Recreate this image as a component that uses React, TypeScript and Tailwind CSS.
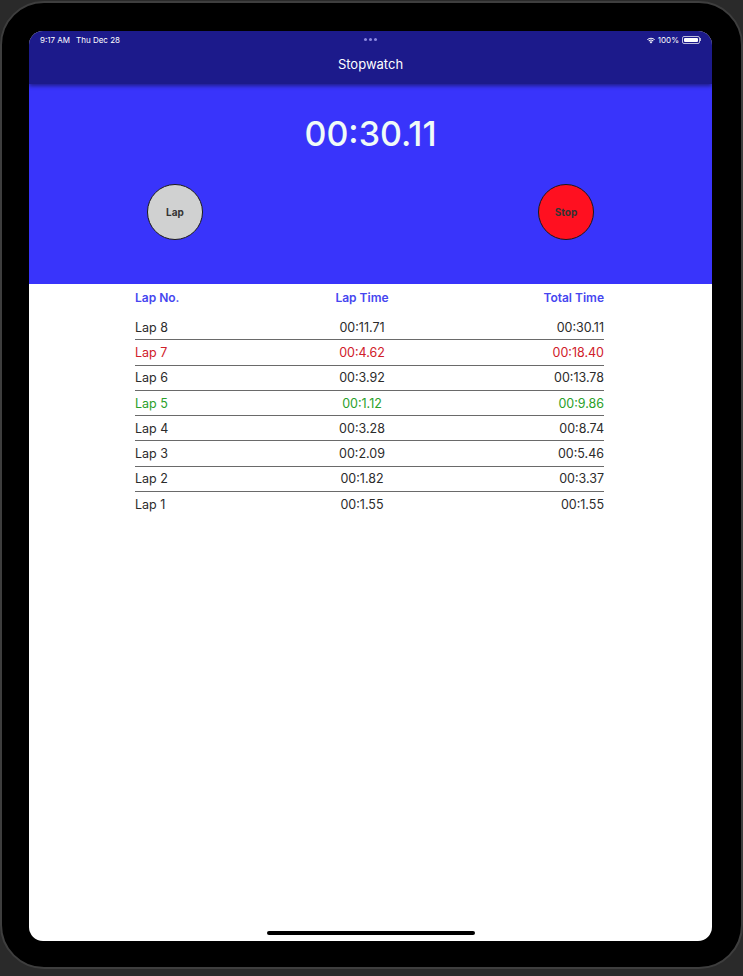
import React from "react";

const laps = [
  { n: "Lap 8", lap: "00:11.71", total: "00:30.11", c: "text-[#2b2b2b]" },
  { n: "Lap 7", lap: "00:4.62", total: "00:18.40", c: "text-[#d0202a]" },
  { n: "Lap 6", lap: "00:3.92", total: "00:13.78", c: "text-[#2b2b2b]" },
  { n: "Lap 5", lap: "00:1.12", total: "00:9.86", c: "text-[#2aa02a]" },
  { n: "Lap 4", lap: "00:3.28", total: "00:8.74", c: "text-[#2b2b2b]" },
  { n: "Lap 3", lap: "00:2.09", total: "00:5.46", c: "text-[#2b2b2b]" },
  { n: "Lap 2", lap: "00:1.82", total: "00:3.37", c: "text-[#2b2b2b]" },
  { n: "Lap 1", lap: "00:1.55", total: "00:1.55", c: "text-[#2b2b2b]" },
];

export default function App() {
  return (
    <div
      className="w-[743px] h-[976px] bg-[#2a2a2a] overflow-hidden"
      style={{ fontFamily: "Inter, 'Liberation Sans', sans-serif" }}
    >
      <div className="mt-[1px] w-[743px] h-[968px] rounded-[44px] border-2 border-[#3e3e3e] bg-black pl-[27px] pt-[28px]">
        <div className="w-[683px] h-[910px] rounded-[14px] bg-white overflow-hidden flex flex-col">
          {/* nav bar */}
          <div className="relative z-10 h-[53px] bg-[#1c1a8b] shadow-[0_2px_4px_rgba(0,0,0,0.45)] flex flex-col">
            <div className="h-[17px] flex items-center px-[11px] text-[8px] text-white">
              <div className="flex-1 flex gap-[6px]">
                <span>9:17 AM</span>
                <span>Thu Dec 28</span>
              </div>
              <div className="flex gap-[2px]">
                <span className="w-[3px] h-[3px] rounded-full bg-[#8a88e0]" />
                <span className="w-[3px] h-[3px] rounded-full bg-[#8a88e0]" />
                <span className="w-[3px] h-[3px] rounded-full bg-[#8a88e0]" />
              </div>
              <div className="flex-1 flex justify-end items-center gap-[2px]">
                <svg width="10" height="8" viewBox="0 0 10 8">
                  <path d="M5 7.5 L3.6 6 A2 2 0 0 1 6.4 6 Z" fill="white" />
                  <path d="M2.4 4.8 A3.7 3.7 0 0 1 7.6 4.8 L6.9 5.5 A2.7 2.7 0 0 0 3.1 5.5 Z" fill="white" />
                  <path d="M1 3.4 A5.6 5.6 0 0 1 9 3.4 L8.3 4.1 A4.6 4.6 0 0 0 1.7 4.1 Z" fill="white" />
                </svg>
                <span>100%</span>
                <div className="ml-[1px] flex items-center">
                  <div className="w-[18px] h-[8px] rounded-[2px] border border-white/70 p-[1px]">
                    <div className="w-full h-full bg-white rounded-[1px]" />
                  </div>
                  <div className="w-[1px] h-[3px] bg-white/70" />
                </div>
              </div>
            </div>
            <div className="flex-1 flex items-center justify-center text-[13px] text-white pb-[2px]">
              Stopwatch
            </div>
          </div>
          {/* timer area */}
          <div className="h-[200px] bg-[#3934fb] flex flex-col items-center">
            <div className="mt-[30px] h-[40px] flex items-center text-[34px] leading-none text-[#f0fbf7] font-medium">
              00:30.11
            </div>
            <div className="mt-[30px] w-full px-[118px] flex justify-between">
              <div className="w-[56px] h-[56px] rounded-full bg-[#d0d1d1] border-[1.5px] border-[#1a1a1a] flex items-center justify-center text-[10px] font-bold text-[#333]">
                Lap
              </div>
              <div className="w-[56px] h-[56px] rounded-full bg-[#ff1020] border-[1.5px] border-[#1a1a1a] flex items-center justify-center text-[10px] font-bold text-[#333]">
                Stop
              </div>
            </div>
          </div>
          {/* table */}
          <div className="w-[469px] ml-[106px]">
            <div className="mt-[5px] h-[14px] grid grid-cols-[170px_114px_1fr] items-center text-[12px] font-semibold text-[#4646f0]">
              <span>Lap No.</span>
              <span className="text-center">Lap Time</span>
              <span className="text-right">Total Time</span>
            </div>
            <div className="mt-[12px]">
              {laps.map((l, i) => (
                <div
                  key={l.n}
                  className={`h-[25.25px] grid grid-cols-[170px_114px_1fr] items-center pt-[2px] text-[12.5px] ${l.c} ${
                    i < laps.length - 1 ? "border-b border-[#6a6a6a]" : ""
                  }`}
                >
                  <span>{l.n}</span>
                  <span className="text-center">{l.lap}</span>
                  <span className="text-right">{l.total}</span>
                </div>
              ))}
            </div>
          </div>
          <div className="flex-1" />
          <div className="flex justify-center mb-[6px]">
            <div className="w-[208px] h-[4px] rounded-full bg-black" />
          </div>
        </div>
      </div>
    </div>
  );
}
